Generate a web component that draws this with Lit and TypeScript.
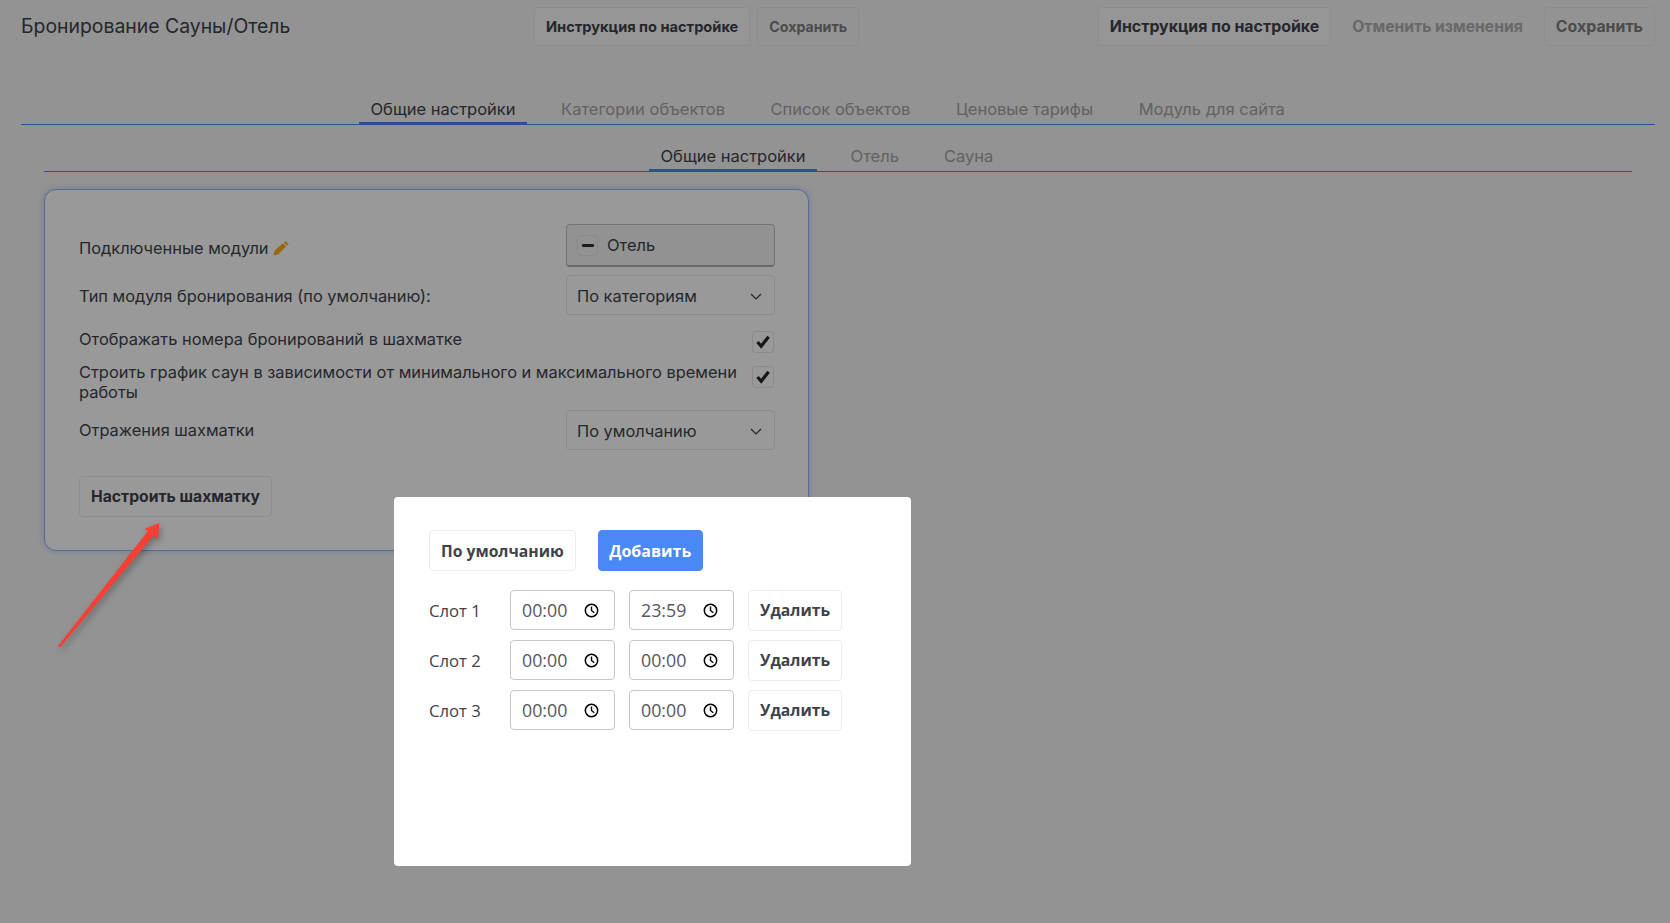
import { LitElement, html, css, svg } from 'lit';
import { customElement } from 'lit/decorators.js';

const chevron = html`<svg class="chev" viewBox="0 0 12 7" width="12" height="7"><path d="M1 1l5 5 5-5" fill="none" stroke="#3c4048" stroke-width="1.2"/></svg>`;
const check = html`<svg viewBox="0 0 14 14" width="14" height="14"><path d="M1.5 7 5.2 11.2 12.6 1.8" fill="none" stroke="#24272f" stroke-width="3.2"/></svg>`;
const clock = html`<svg class="clock" viewBox="0 0 16 16" width="15" height="15"><circle cx="8" cy="8" r="6.6" fill="none" stroke="#000" stroke-width="1.6"/><path d="M8 3.8V8l3 2.4" fill="none" stroke="#000" stroke-width="1.5"/></svg>`;
const pencil = html`<svg class="pencil" viewBox="0 0 16 15" width="16" height="15"><path d="M.5 14.5l1-4.8L10 2.2l3.2 3-8 8.2z" fill="#ffa916"/><path d="M11 1.4 12.6.2l3 2.8-1.4 1.6z" fill="#ffa916"/></svg>`;

const slots = [
  { name: 'Слот 1', from: '00:00', to: '23:59' },
  { name: 'Слот 2', from: '00:00', to: '00:00' },
  { name: 'Слот 3', from: '00:00', to: '00:00' },
];

@customElement('app-root')
export class AppRoot extends LitElement {
  static styles = css`
    :host {
      display: block;
      position: relative;
      height: 923px;
      overflow: hidden;
      background: #f5f5f5;
      color: #3e424b;
      font-family: Inter, 'Liberation Sans', sans-serif;
      font-size: 16.4px;
    }
    header {
      display: flex;
      align-items: center;
      padding: 7px 15px 0 21px;
    }
    .title {
      width: 513px;
      padding-bottom: 2px;
      font-size: 19.4px;
    }
    .group {
      display: flex;
      align-items: center;
      gap: 7px;
    }
    .right {
      margin-left: auto;
      gap: 0;
    }
    .btn {
      display: inline-flex;
      align-items: center;
      justify-content: center;
      box-sizing: border-box;
      height: 39px;
      padding: 0 11px;
      border: 1px solid #ececec;
      border-radius: 4px;
      background: #fbfbfb;
      font-size: 14.6px;
      font-weight: 700;
      white-space: nowrap;
    }
    .muted {
      color: #7e7e7e;
      background: #f6f6f6;
      font-size: 14.2px;
    }
    .right .btn {
      font-size: 15.9px;
    }
    .right .ghost {
      border-color: transparent;
      background: none;
      color: #adadad;
      font-size: 15.7px;
      padding: 0 20px;
    }
    .tabs {
      display: flex;
      gap: 22.5px;
      margin: 51px 15px 0 21px;
      padding-left: 338px;
      border-bottom: 1px solid #4a88f5;
    }
    .tabs.sub {
      gap: 22px;
      margin: 19px 38px 0 44px;
      padding-left: 605px;
    }
    .tab {
      box-sizing: border-box;
      height: 28px;
      margin-bottom: -1px;
      padding: 0 11.5px;
      line-height: 25px;
      color: #a4a4a4;
      font-size: 16.5px;
      border-bottom: 3px solid transparent;
      white-space: nowrap;
    }
    .tab.on {
      color: #3e424b;
      border-bottom-color: #4a88f5;
    }
    .card {
      box-sizing: border-box;
      width: 765px;
      height: 362px;
      margin: 17px 0 0 44px;
      padding: 34px 33px 34px 34px;
      border: 1px solid #92b6f6;
      border-radius: 12px;
      background: #fff;
      box-shadow: 0 0 6px rgba(74, 136, 245, 0.35);
    }
    .row {
      display: flex;
      justify-content: space-between;
      align-items: center;
      line-height: 20px;
    }
    .row.top {
      align-items: flex-start;
    }
    .row .lbl {
      display: flex;
      align-items: center;
      gap: 4px;
    }
    .r1 .lbl {
      margin-top: 5px;
    }
    .r2 {
      margin-top: 8px;
    }
    .r2 .lbl {
      margin-top: 2px;
    }
    .r3 {
      margin-top: 14px;
    }
    .r4 {
      margin-top: 9px;
    }
    .r5 {
      margin-top: 8px;
    }
    .control {
      display: flex;
      align-items: center;
      box-sizing: border-box;
      width: 209px;
      height: 40px;
      padding: 2px 12px 0 10px;
      border: 1px solid #e8e8e8;
      border-radius: 4px;
    }
    .control .chev {
      margin-left: auto;
    }
    .multi {
      height: 43px;
      padding: 0 10px;
      gap: 9px;
      background: #f4f4f4;
      border: 1px solid #c2c2c2;
      border-bottom: 2px solid #b0b0b0;
    }
    .minus {
      display: flex;
      align-items: center;
      justify-content: center;
      width: 21px;
      height: 21px;
      border: 1px solid #e4e4e4;
      border-radius: 4px;
      box-sizing: border-box;
    }
    .minus i {
      display: block;
      width: 12px;
      height: 3px;
      border-radius: 1px;
      background: #2b2e36;
    }
    .cb {
      display: flex;
      align-items: center;
      justify-content: center;
      flex: none;
      box-sizing: border-box;
      width: 22px;
      height: 22px;
      margin-right: 1px;
      border: 1px solid #e4e4e4;
      border-radius: 4px;
      background: #fff;
    }
    .r3 .cb {
      margin-top: 2px;
    }
    .r4 .cb {
      margin-top: 4px;
    }
    .setup {
      height: 41px;
      margin-top: 26px;
      padding: 0 11px;
      background: #fff;
      font-size: 15.7px;
    }
    .overlay {
      position: absolute;
      inset: 0;
      background: rgba(0, 0, 0, 0.4);
    }
    .arrow {
      position: absolute;
      left: 50px;
      top: 515px;
      filter: drop-shadow(2px 3px 3px rgba(0, 0, 0, 0.3));
    }
    .modal {
      position: absolute;
      left: 394px;
      top: 497px;
      box-sizing: border-box;
      width: 517px;
      height: 369px;
      padding: 33px 35px;
      border-radius: 4px;
      background: #fff;
      font-family: 'Open Sans', 'Noto Sans', sans-serif;
      font-size: 16.7px;
    }
    .modal .btn {
      height: 41px;
      background: #fff;
      font-size: 15.7px;
    }
    .modal .primary {
      padding: 0 10.5px;
      background: #4a88f5;
      border-color: #4a88f5;
      color: #fff;
      font-size: 16px;
    }
    .actions {
      display: flex;
      gap: 22px;
      margin-bottom: 19px;
    }
    .slots {
      display: grid;
      grid-template-columns: 67px 105px 105px 94px;
      grid-auto-rows: 40px;
      column-gap: 14px;
      row-gap: 10px;
      align-items: center;
    }
    .time {
      display: flex;
      align-items: center;
      justify-content: space-between;
      box-sizing: border-box;
      height: 40px;
      padding: 0 15px 0 11px;
      border: 1px solid #c6c6c6;
      border-radius: 4px;
      font-size: 17.8px;
      color: #555860;
    }
  `;

  render() {
    return html`
      <header>
        <div class="title">Бронирование Сауны/Отель</div>
        <div class="group">
          <span class="btn">Инструкция по настройке</span>
          <span class="btn muted">Сохранить</span>
        </div>
        <div class="group right">
          <span class="btn">Инструкция по настройке</span>
          <span class="btn ghost">Отменить изменения</span>
          <span class="btn muted">Сохранить</span>
        </div>
      </header>

      <nav class="tabs">
        <span class="tab on">Общие настройки</span>
        <span class="tab">Категории объектов</span>
        <span class="tab">Список объектов</span>
        <span class="tab">Ценовые тарифы</span>
        <span class="tab">Модуль для сайта</span>
      </nav>
      <nav class="tabs sub">
        <span class="tab on">Общие настройки</span>
        <span class="tab">Отель</span>
        <span class="tab">Сауна</span>
      </nav>

      <section class="card">
        <div class="row r1">
          <div class="lbl">Подключенные модули ${pencil}</div>
          <div class="control multi"><span class="minus"><i></i></span>Отель</div>
        </div>
        <div class="row r2">
          <div class="lbl">Тип модуля бронирования (по умолчанию):</div>
          <div class="control">По категориям ${chevron}</div>
        </div>
        <div class="row top r3">
          <div class="lbl">Отображать номера бронирований в шахматке</div>
          <div class="cb">${check}</div>
        </div>
        <div class="row top r4">
          <div>Строить график саун в зависимости от минимального и максимального времени<br />работы</div>
          <div class="cb">${check}</div>
        </div>
        <div class="row r5">
          <div class="lbl">Отражения шахматки</div>
          <div class="control">По умолчанию ${chevron}</div>
        </div>
        <span class="btn setup">Настроить шахматку</span>
      </section>

      <div class="overlay"></div>

      <svg class="arrow" width="120" height="140" viewBox="50 515 120 140">
        ${svg`<polygon points="58,646 148,531 144.3,529 159.3,523 157.7,539.3 153.5,535.5 60,647.5" fill="#fa3e33"/>`}
      </svg>

      <div class="modal">
        <div class="actions">
          <span class="btn">По умолчанию</span>
          <span class="btn primary">Добавить</span>
        </div>
        <div class="slots">
          ${slots.map(
            (s) => html`
              <span>${s.name}</span>
              <div class="time">${s.from}${clock}</div>
              <div class="time">${s.to}${clock}</div>
              <span class="btn">Удалить</span>
            `
          )}
        </div>
      </div>
    `;
  }
}
